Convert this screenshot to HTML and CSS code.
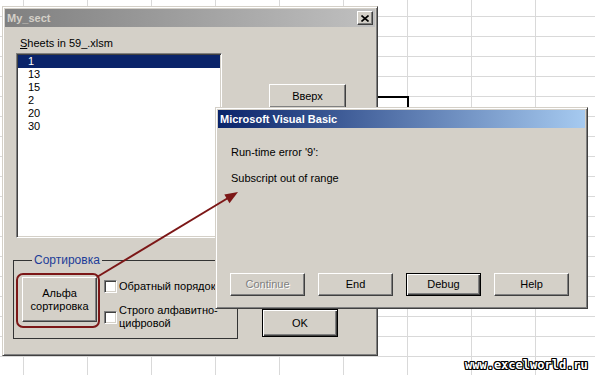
FILE: index.html
```html
<!DOCTYPE html>
<html>

	<head>
		<meta charset="UTF-8">
		<title>My_sect</title>
		<link rel="stylesheet" href="styles.css">
	</head>

	<body>
		<div id="sheet">
			<div class="cell-sel"></div>

			<div class="win" id="form">
				<div class="caption inactive">
					<span>My_sect</span>
					<span class="close">
						<svg width="8" height="7" viewBox="0 0 8 7"><path d="M0.5 0.5 L7.5 6.5 M7.5 0.5 L0.5 6.5" stroke="#000" stroke-width="1.6" fill="none"/></svg>
					</span>
				</div>
				<div class="form-body">
					<div class="col-left">
						<div class="lbl"><u>S</u>heets in 59_.xlsm</div>
						<ul class="listbox">
							<li class="sel">1</li>
							<li>13</li>
							<li>15</li>
							<li>2</li>
							<li>20</li>
							<li>30</li>
						</ul>
						<fieldset class="frame">
							<legend>Сортировка</legend>
							<div class="frame-row">
								<div class="btn btn-big">Альфа<br>сортировка</div>
								<div class="checks">
									<div class="chk one"><span class="box"></span><span>Обратный порядок</span></div>
									<div class="chk two"><span class="box"></span><span>Строго алфавитно-<br>цифровой</span></div>
								</div>
							</div>
						</fieldset>
					</div>
					<div class="col-right">
						<div class="btn btn-up">Вверх</div>
						<div class="btn btn-def btn-ok">OK</div>
					</div>
				</div>
			</div>

			<div class="win" id="vb">
				<div class="caption active">Microsoft Visual Basic</div>
				<div class="vb-body">
					<p>Run-time error '9':</p>
					<p>Subscript out of range</p>
					<div class="vb-buttons">
						<div class="btn disabled">Continue</div>
						<div class="btn">End</div>
						<div class="btn btn-def">Debug</div>
						<div class="btn">Help</div>
					</div>
				</div>
			</div>

			<svg class="annot" width="595" height="375" viewBox="0 0 595 375">
				<rect x="17" y="274" width="82" height="53" rx="6" ry="6" fill="none" stroke="#7c1717" stroke-width="2"/>
				<line x1="97" y1="277" x2="228" y2="198" stroke="#7c1717" stroke-width="2"/>
				<polygon points="238,192 229.5,203.3 224.3,194.5" fill="#7c1717"/>
			</svg>

			<div class="watermark">www.excelworld.ru</div>
		</div>
	</body>

</html>
```

FILE: styles.css
```css
body {
	margin: 0;
	font-family: "Liberation Sans", Arial, sans-serif;
	font-size: 11px;
	color: #000;
}

#sheet {
	position: relative;
	width: 595px;
	height: 375px;
	overflow: hidden;
	background-color: #fff;
	background-image: linear-gradient(to right, #d9d9d9 1px, transparent 1px), linear-gradient(to bottom, #d9d9d9 1px, transparent 1px);
	background-size: 64px 100%, 100% 20px;
	background-position: 23px 0, 0 16px;
}

.cell-sel {
	position: absolute;
	left: 376px;
	top: 96px;
	width: 31px;
	height: 30px;
	border-top: 2px solid #000;
	border-right: 2px solid #000;
}

/* classic windows */
.win {
	position: absolute;
	box-sizing: border-box;
	background: #d4d0c8;
	border: 1px solid;
	border-color: #d4d0c8 #404040 #404040 #d4d0c8;
	box-shadow: inset 1px 1px #fff, inset -1px -1px #808080;
	padding: 2px;
	display: flex;
	flex-direction: column;
}

#form {
	left: 2px;
	top: 6px;
	width: 376px;
	height: 350px;
}

#vb {
	left: 215px;
	top: 107px;
	width: 373px;
	height: 202px;
}

.caption {
	height: 18px;
	margin-bottom: 1px;
	display: flex;
	align-items: center;
	justify-content: space-between;
	padding: 0 2px;
	font-weight: bold;
	font-size: 11px;
	flex-shrink: 0;
}

.caption.inactive {
	background: linear-gradient(to right, #808080, #c0c0c0);
	color: #d4d0c8;
}

.caption.active {
	background: linear-gradient(to right, #0a246a, #a6caf0);
	color: #fff;
}

.close {
	box-sizing: border-box;
	width: 16px;
	height: 14px;
	background: #d4d0c8;
	border: 1px solid;
	border-color: #fff #404040 #404040 #fff;
	box-shadow: inset -1px -1px #808080;
	display: flex;
	align-items: center;
	justify-content: center;
}

/* buttons */
.btn {
	box-sizing: border-box;
	background: #d4d0c8;
	border: 1px solid;
	border-color: #fff #404040 #404040 #fff;
	box-shadow: inset -1px -1px #808080;
	display: flex;
	align-items: center;
	justify-content: center;
	text-align: center;
	line-height: 13px;
}

.btn-def {
	border-color: #000;
	box-shadow: inset 1px 1px #fff, inset -1px -1px #404040, inset -2px -2px #808080;
}

.btn.disabled {
	color: #808080;
	text-shadow: 1px 1px #fff;
}

/* user form */
.form-body {
	display: flex;
	flex: 1;
}

.col-left {
	width: 225px;
	padding-left: 8px;
}

.lbl {
	margin: 9px 0 0 7px;
	line-height: 13px;
}

.listbox {
	box-sizing: border-box;
	list-style: none;
	margin: 3px 0 0 3px;
	padding: 1px 0 0;
	width: 206px;
	height: 185px;
	background: #fff;
	border: 1px solid;
	border-color: #808080 #fff #fff #808080;
	box-shadow: inset 1px 1px #404040, inset -1px -1px #d4d0c8;
}

.listbox li {
	margin: 0 1px 0 1px;
	padding-left: 10px;
	line-height: 13px;
}

.listbox li.sel {
	background: #0a246a;
	color: #fff;
}

.frame {
	box-sizing: border-box;
	width: 225px;
	margin: 15px 0 0;
	padding: 10px 0 8px 8px;
	border: 1px solid #333;
	min-width: 0;
}

.frame legend {
	margin-left: 10px;
	padding: 0 2px;
	line-height: 14px;
	color: #1c3c98;
	font-size: 12px;
}

.frame-row {
	display: flex;
}

.btn-big {
	width: 75px;
	height: 45px;
	flex-shrink: 0;
}

.checks {
	margin-left: 7px;
	display: flex;
	flex-direction: column;
	gap: 11px;
	padding-top: 3px;
}

.chk {
	display: flex;
	align-items: center;
	line-height: 13px;
	white-space: nowrap;
}

.chk .box {
	box-sizing: border-box;
	width: 13px;
	height: 13px;
	margin-right: 2px;
	background: #fff;
	border: 1px solid;
	border-color: #808080 #fff #fff #808080;
	box-shadow: inset 1px 1px #404040, inset -1px -1px #d4d0c8;
	flex-shrink: 0;
}

.col-right {
	display: flex;
	flex-direction: column;
}

.btn-up {
	width: 77px;
	height: 24px;
	margin: 56px 0 0 31px;
}

.btn-ok {
	width: 76px;
	height: 28px;
	margin: 201px 0 0 24px;
}

/* error box */
.vb-body {
	flex: 1;
	display: flex;
	flex-direction: column;
	padding: 16px 0 10px 12px;
}

.vb-body p {
	margin: 0 0 12px 1px;
	line-height: 14px;
}

.vb-buttons {
	margin-top: auto;
	display: flex;
	gap: 13px;
}

.vb-buttons .btn {
	width: 75px;
	height: 23px;
}

/* overlays */
.annot {
	position: absolute;
	left: 0;
	top: 0;
}

.watermark {
	position: absolute;
	left: 465px;
	top: 358px;
	font-family: "DejaVu Sans Mono", monospace;
	font-weight: bold;
	font-size: 12px;
	line-height: 14px;
	color: #fff;
	text-shadow: 1px 0 #000, -1px 0 #000, 0 1px #000, 0 -1px #000, 1px 1px #000, -1px -1px #000, 1px -1px #000, -1px 1px #000;
}
```
